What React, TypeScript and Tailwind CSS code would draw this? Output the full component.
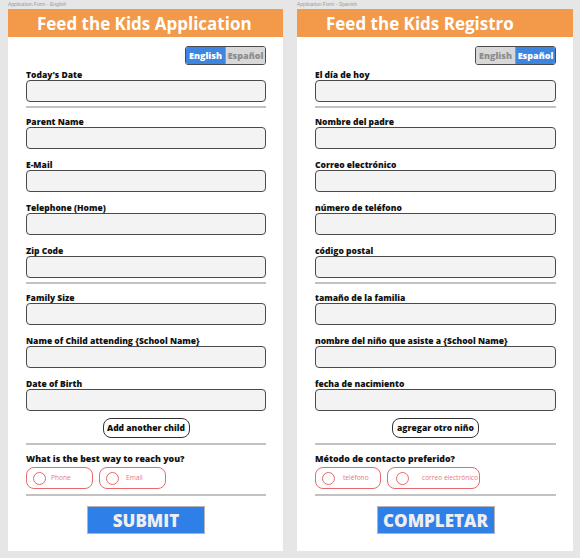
type Strings = {
  caption: string
  title: string
  lang: 'en' | 'es'
  groups: string[][]
  addChild: string
  question: string
  options: { text: string; width: string; circleMl: string; textMl: string }[]
  submit: string
}

const english: Strings = {
  caption: 'Application Form - English',
  title: 'Feed the Kids Application',
  lang: 'en',
  groups: [
    ["Today's Date"],
    ['Parent Name', 'E-Mail', 'Telephone (Home)', 'Zip Code'],
    ['Family Size', 'Name of Child attending {School Name}', 'Date of Birth'],
  ],
  addChild: 'Add another child',
  question: 'What is the best way to reach you?',
  options: [
    { text: 'Phone', width: 'w-[67px]', circleMl: 'ml-[6px]', textMl: 'ml-[5px]' },
    { text: 'Email', width: 'w-[67px]', circleMl: 'ml-[6px]', textMl: 'ml-[7px]' },
  ],
  submit: 'SUBMIT',
}

const spanish: Strings = {
  caption: 'Application Form - Spanish',
  title: 'Feed the Kids Registro',
  lang: 'es',
  groups: [
    ['El día de hoy'],
    ['Nombre del padre', 'Correo electrónico', 'número de teléfono', 'código postal'],
    ['tamaño de la familia', 'nombre del niño que asiste a {School Name}', 'fecha de nacimiento'],
  ],
  addChild: 'agregar otro niño',
  question: 'Método de contacto preferido?',
  options: [
    { text: 'teléfono', width: 'w-[66px]', circleMl: 'ml-[6px]', textMl: 'ml-[8px]' },
    { text: 'correo electrónico', width: 'w-[93px]', circleMl: 'ml-[8px]', textMl: 'ml-[13px]' },
  ],
  submit: 'COMPLETAR',
}

function Separator({ className = '' }: { className?: string }) {
  return <div className={`h-[2px] bg-[#c2c2c2] ${className}`} />
}

function Field({ label }: { label: string }) {
  return (
    <div className="flex flex-col">
      <label className="text-[8.5px] leading-[11px] h-[11px] font-extrabold text-[#111] whitespace-nowrap">{label}</label>
      <div className="h-[22px] rounded-[4px] border-[1.5px] border-[#4a4a4a] bg-[#f3f3f3]" />
    </div>
  )
}

function Group({ labels, className = '' }: { labels: string[]; className?: string }) {
  return (
    <div className={`flex flex-col gap-[10px] ${className}`}>
      {labels.map(l => (
        <Field key={l} label={l} />
      ))}
    </div>
  )
}

function Toggle({ lang }: { lang: 'en' | 'es' }) {
  const on = 'bg-[#3c86e1] text-white'
  const off = 'bg-[#d8d8d8] text-[#8c8c8c]'
  return (
    <div className="flex h-[19px] w-[81px] rounded-[3px] border-[1.5px] border-[#4a4a4a] overflow-hidden text-[9px] font-extrabold">
      <div className={`flex-1 flex items-center justify-center ${lang === 'en' ? on : off}`}>English</div>
      <div className={`flex-1 flex items-center justify-center border-l border-[#9a9a9a] ${lang === 'es' ? on : off}`}>Español</div>
    </div>
  )
}

function Panel({ s, width }: { s: Strings; width: string }) {
  return (
    <div className={`flex flex-col ${width}`}>
      <div className="h-[9px] text-[5px] leading-[9px] text-[#9a9a9a] font-['Liberation_Sans',sans-serif]">{s.caption}</div>
      <div className="bg-white flex flex-col">
        <div className="h-[28px] bg-[#f2994a] flex items-center pl-[29px]">
          <h1 className="text-[17px] font-bold text-white whitespace-nowrap leading-none">{s.title}</h1>
        </div>
        <div className="flex flex-col pl-[18px] pr-[17px] pt-[9px] pb-[17px]">
          <div className="flex justify-end">
            <Toggle lang={s.lang} />
          </div>
          <Group labels={s.groups[0]} className="mt-[4px]" />
          <Separator className="mt-[4px]" />
          <Group labels={s.groups[1]} className="mt-[8px]" />
          <Separator className="mt-[4px]" />
          <Group labels={s.groups[2]} className="mt-[8px]" />
          <div className="flex justify-center mt-[7px]">
            <button className="h-[20px] w-[87px] rounded-[8px] border-[1.5px] border-[#333] bg-white text-[8.5px] font-extrabold text-[#111] whitespace-nowrap">
              {s.addChild}
            </button>
          </div>
          <Separator className="mt-[5px]" />
          <div className="mt-[8px] text-[8.8px] leading-[12px] font-extrabold text-[#111] whitespace-nowrap">{s.question}</div>
          <div className="flex gap-[6px] mt-[2px]">
            {s.options.map(o => (
              <div key={o.text} className={`h-[22px] ${o.width} rounded-[8px] border-[1.5px] border-[#e86a6a] flex items-center`}>
                <div className={`w-[13px] h-[13px] rounded-full border-[1.5px] border-[#e86a6a] shrink-0 ${o.circleMl}`} />
                <span className={`text-[6.6px] text-[#e87878] whitespace-nowrap ${o.textMl}`}>{o.text}</span>
              </div>
            ))}
          </div>
          <Separator className="mt-[5px]" />
          <div className="flex justify-center mt-[10px]">
            <button className="h-[28px] w-[118px] bg-[#2f7fe8] border border-[#b5b5b5] text-[17px] font-extrabold text-[#eeeeee] leading-none">
              {s.submit}
            </button>
          </div>
        </div>
      </div>
    </div>
  )
}

export default function App() {
  return (
    <div className="w-[580px] h-[558px] bg-[#e6e6e6] flex gap-[14px] pl-[8px] font-['Open_Sans',sans-serif]">
      <Panel s={english} width="w-[275px]" />
      <Panel s={spanish} width="w-[276px]" />
    </div>
  )
}
